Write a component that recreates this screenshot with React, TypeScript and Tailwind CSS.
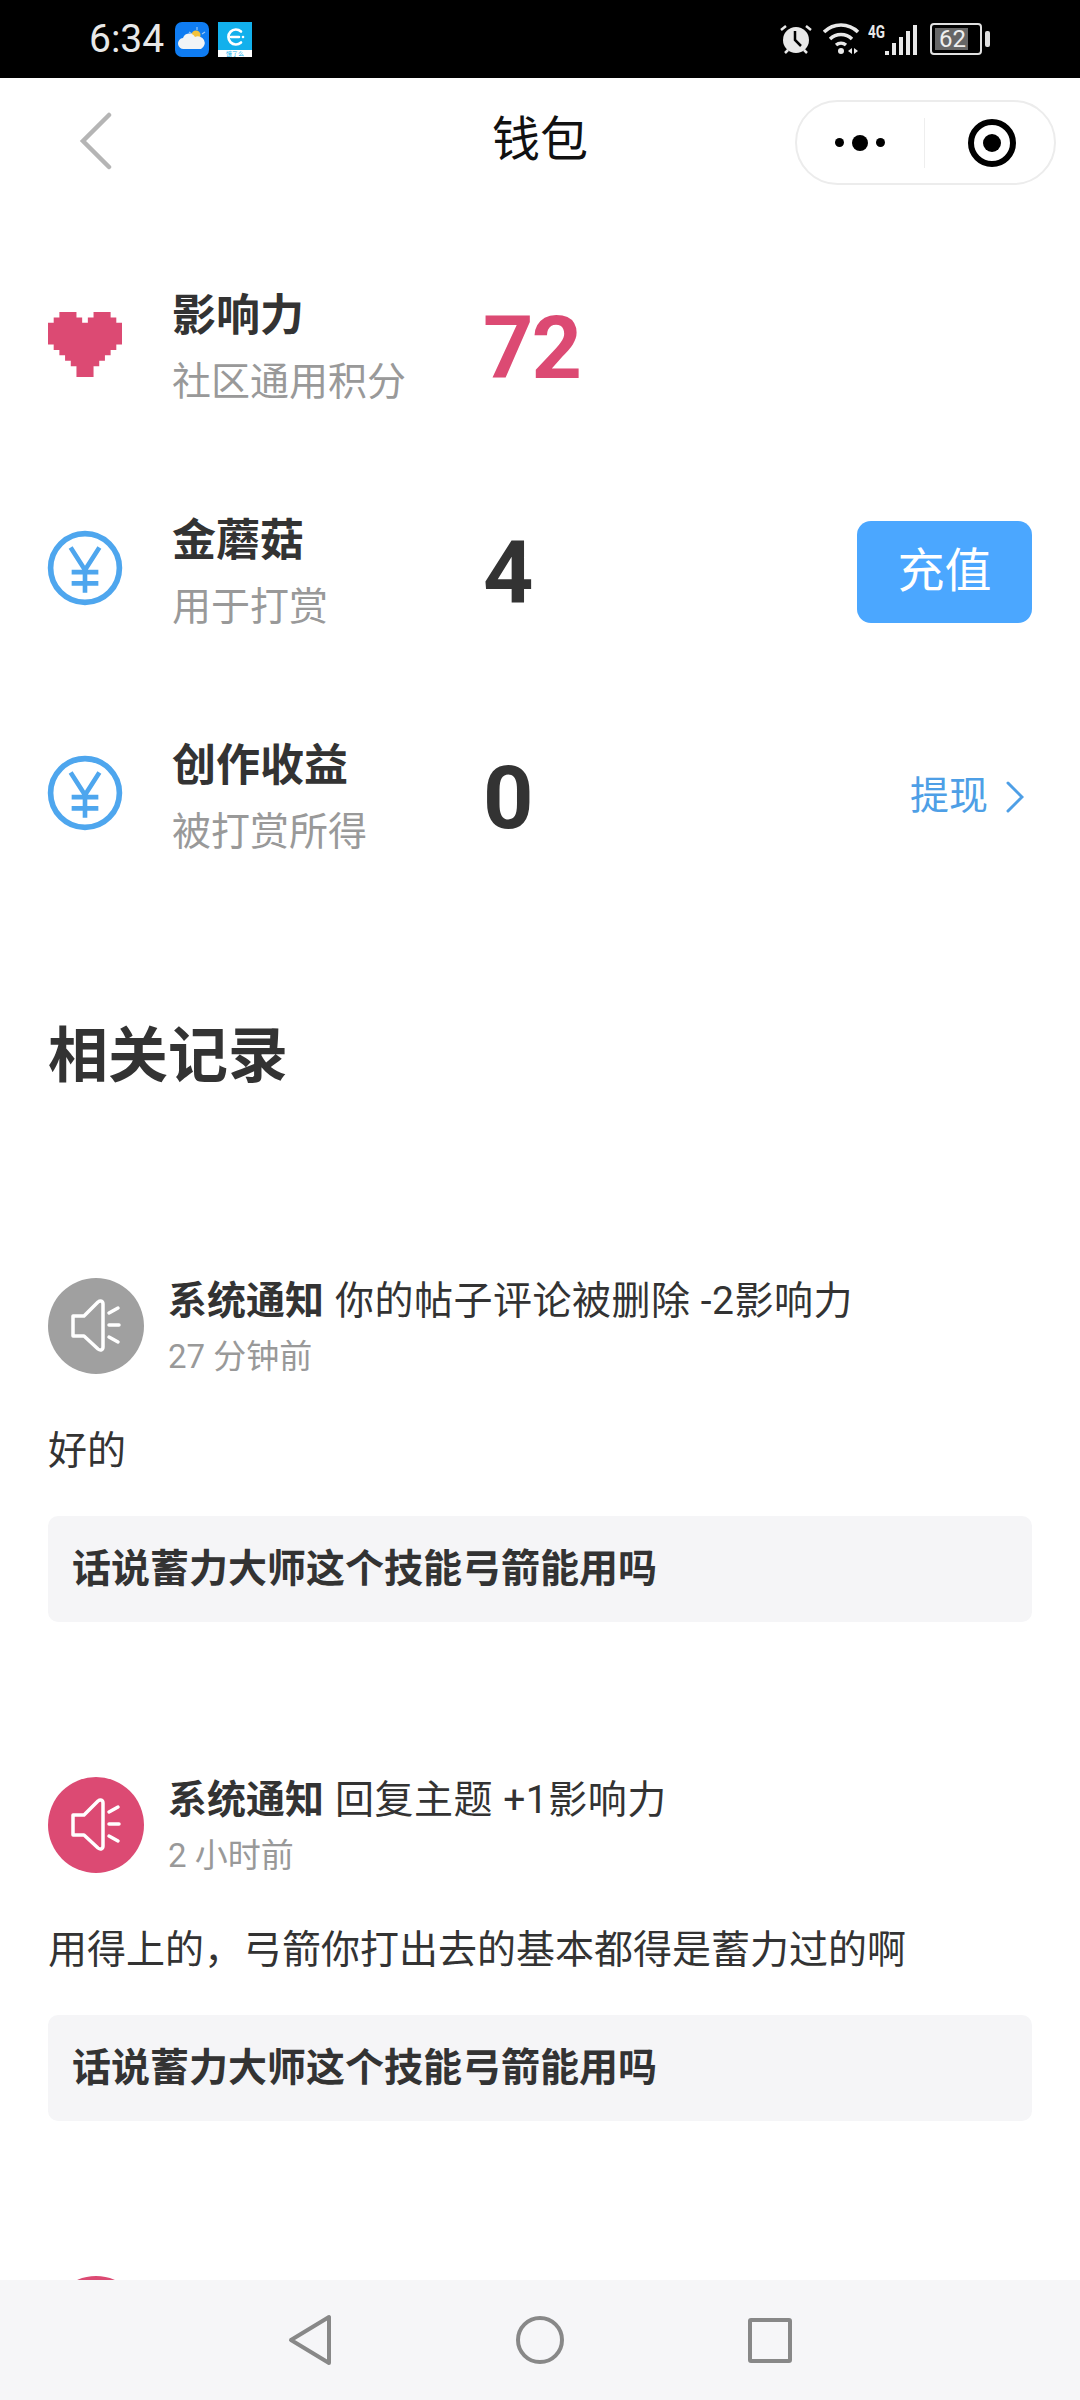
import type { ReactNode } from 'react';

const FONT = "font-['Roboto','Noto_Sans_CJK_SC',sans-serif]";

function StatusBar() {
  return (
    <div className="h-[78px] shrink-0 bg-black flex items-center pl-[89px] pr-[90px] text-[#e8e8e8]">
      <span className="text-[39px] leading-none w-[86px]">6:34</span>
      {/* weather */}
      <svg width="34" height="35" viewBox="0 0 34 35">
        <rect width="34" height="35" rx="7" fill="#0f7cf2" />
        <path d="M22 5v3M30 10l-3 2M14 10l3 2" stroke="#9cc9f5" strokeWidth="1.200" />
        <circle cx="21" cy="13" r="4.500" fill="#f4c23c" />
        <path d="M9 27a5.500 5.500 0 0 1-1-11 6.500 6.500 0 0 1 12-1 6 6 0 0 1 6 12z" fill="#f2f4f6" />
      </svg>
      {/* eleme */}
      <div className="ml-[9px] w-[34px] h-[35px] bg-[#12b0ec] flex flex-col items-center overflow-hidden">
        <svg width="34" height="28" viewBox="0 0 34 28" className="shrink-0">
          <path d="M21 15H13M23 9.500a7.500 7.500 0 1 0 0 11" fill="none" stroke="#fff" strokeWidth="2.600" strokeLinecap="round" />
          <circle cx="25" cy="15" r="1.300" fill="#fff" />
        </svg>
        <div className="flex-1 w-full bg-white text-[6px] leading-[7px] text-center text-[#12b0ec]">饿了么</div>
      </div>
      <div className="ml-auto flex items-center">
        <svg width="34" height="32" viewBox="0 0 34 32" className="mr-[10px]">
          <circle cx="17" cy="17" r="13" fill="#e8e8e8" />
          <path d="M16 8v9l6 6" fill="none" stroke="#000" strokeWidth="2.500" />
          <path d="M2 7l5-4M32 7l-5-4M6 30l3-3M28 30l-3-3" stroke="#e8e8e8" strokeWidth="2.500" />
        </svg>
        <svg width="37" height="32" viewBox="0 0 37 32" className="mr-[8px]">
          <path d="M1 9a24 24 0 0 1 34 0M7 16a16 16 0 0 1 22 0M13 22a8 8 0 0 1 10 0" fill="none" stroke="#e8e8e8" strokeWidth="3.500" />
          <circle cx="18" cy="28" r="3" fill="#e8e8e8" />
          <path d="M29 25v6l-4-3zM31 25l4 3-4 3z" fill="#e8e8e8" />
        </svg>
        <div className="relative w-[49px] h-[31px] mr-[13px]">
          <span className="absolute left-0 top-[-1px] text-[18px] font-bold leading-none scale-x-75 origin-left">4G</span>
          <div className="absolute inset-0 flex items-end justify-end gap-[3px]">
            <div className="w-[4px] h-[4px] bg-[#e8e8e8]" />
            <div className="w-[4px] h-[12px] bg-[#e8e8e8]" />
            <div className="w-[4px] h-[18px] bg-[#e8e8e8]" />
            <div className="w-[4px] h-[24px] bg-[#e8e8e8]" />
            <div className="w-[4px] h-[30px] bg-[#e8e8e8]" />
          </div>
        </div>
        <div className="w-[52px] h-[32px] rounded-[4px] border-2 border-[#e0e0e0] p-[3px] flex">
          <div className="relative w-[33px] bg-[#666] flex items-center">
            <span className="absolute left-[4px] text-[24px] leading-none text-[#eee]">62</span>
          </div>
        </div>
        <div className="ml-[3px] w-[5px] h-[16px] rounded-[2px] bg-[#e0e0e0]" />
      </div>
    </div>
  );
}

function NavBar() {
  return (
    <div className="relative h-[126px] shrink-0 flex items-center justify-center">
      <svg width="34" height="58" viewBox="0 0 34 58" className="absolute left-[79px] top-[34px]">
        <path d="M30 3L4 29l26 26" fill="none" stroke="#b5b5b5" strokeWidth="4.500" strokeLinecap="round" />
      </svg>
      <h1 className="text-[48px] font-normal leading-none text-[#111] mt-[-2px]">钱包</h1>
      <div className="absolute left-[795px] top-[22px] w-[261px] h-[85px] rounded-full border-2 border-[#ececec] bg-white flex items-center">
        <div className="w-[125px] flex items-center justify-center gap-[8px]">
          <div className="w-[9px] h-[9px] rounded-full bg-black" />
          <div className="w-[16px] h-[16px] rounded-full bg-black" />
          <div className="w-[9px] h-[9px] rounded-full bg-black" />
        </div>
        <div className="ml-[2px] w-[1px] h-[50px] bg-[#eeeeee]" />
        <div className="flex-1 flex items-center justify-center pl-[4px]">
          <div className="w-[48px] h-[48px] rounded-full border-[6px] border-black flex items-center justify-center">
            <div className="w-[18px] h-[18px] rounded-full bg-black" />
          </div>
        </div>
      </div>
    </div>
  );
}

function PixelHeart() {
  return (
    <svg width="74" height="65" viewBox="0 0 13 12" preserveAspectRatio="none" fill="#dc4a73" className="mt-[-4px]">
      <path d="M2 0h3v1h1v1h1V1h1V0h3v1h1v1h1v4h-1v1h-1v1h-1v1H9v1H8v2H5v-2H4V9H3V8H2V7H1V6H0V2h1V1h1z" />
    </svg>
  );
}

function YuanIcon() {
  return (
    <svg width="76" height="76" viewBox="0 0 74 74" fill="none" stroke="#4ea6ee" className="mt-[-7px] ml-[-1px]">
      <circle cx="37" cy="37" r="33.500" strokeWidth="5.500" />
      <path d="M23 17l14 22 14-22M37 39v22M24 41h26M24 52h26" strokeWidth="4.500" />
    </svg>
  );
}

function BalanceRow({ icon, title, sub, value, valueClass, action }: {
  icon: ReactNode; title: string; sub: string; value: string; valueClass: string; action?: ReactNode;
}) {
  return (
    <div className="h-[225px] flex items-center">
      <div className="w-[124px] shrink-0 flex items-center">{icon}</div>
      <div className="w-[311px] shrink-0">
        <div className="text-[44px] leading-[56px] font-bold text-[#333]">{title}</div>
        <div className="text-[39px] leading-[48px] mt-[14px] text-[#999]">{sub}</div>
      </div>
      <div className={`text-[88px] leading-none font-bold tracking-[-2px] mt-[2px] font-['Roboto',sans-serif] ${valueClass}`}>{value}</div>
      {action && <div className="ml-auto">{action}</div>}
    </div>
  );
}

function SpeakerAvatar({ color }: { color: string }) {
  return (
    <div className={`w-[96px] h-[96px] shrink-0 rounded-full flex items-center justify-center ${color}`}>
      <svg width="50" height="54" viewBox="0 0 50 54" fill="none" stroke="#fff" strokeWidth="3.500" strokeLinecap="round" strokeLinejoin="round">
        <path d="M2 17h11L27 3c2.500-2 5-1 5 2v43c0 3-2.500 4-5 2L13 37H2z" />
        <path d="M38 14l9-5M38 26h10M38 38l9 5" />
      </svg>
    </div>
  );
}

function RecordCard({ color, title, time, body, topic }: {
  color: string; title: string; time: string; body: string; topic: string;
}) {
  return (
    <div className="h-[499px]">
      <div className="flex items-start">
        <SpeakerAvatar color={color} />
        <div className="ml-[24px]">
          <div className="text-[39px] leading-[46px] text-[#333] whitespace-nowrap">
            <span className="font-bold">系统通知</span>
            <span className="ml-[11px] tracking-[0.5px]">{title}</span>
          </div>
          <div className="text-[33px] leading-[40px] mt-[13px] text-[#999]">{time}</div>
        </div>
      </div>
      <div className="mt-[51px] text-[39px] leading-[46px] text-[#333]">{body}</div>
      <div className="mt-[42px] h-[106px] rounded-[10px] bg-[#f5f5f7] flex items-center pl-[24px] text-[39px] font-bold text-[#333]">
        {topic}
      </div>
    </div>
  );
}

function BottomNav() {
  return (
    <div className="h-[120px] shrink-0 bg-[#f6f6f8] flex items-center justify-center gap-[184px]">
      <svg width="44" height="52" viewBox="0 0 44 52" fill="none" stroke="#888" strokeWidth="4" strokeLinejoin="round">
        <path d="M41 3v46L3 26z" />
      </svg>
      <div className="w-[48px] h-[48px] rounded-full border-[4px] border-[#888]" />
      <div className="w-[44px] h-[45px] rounded-[3px] border-[4px] border-[#888]" />
    </div>
  );
}

export default function App() {
  return (
    <div className={`w-[1080px] h-[2400px] overflow-hidden bg-white flex flex-col ${FONT}`}>
      <StatusBar />
      <NavBar />
      <div className="flex-1 overflow-hidden px-[48px]">
        <div className="pt-[30px]">
          <BalanceRow icon={<PixelHeart />} title="影响力" sub="社区通用积分" value="72" valueClass="text-[#dc4a73]" />
          <BalanceRow
            icon={<YuanIcon />}
            title="金蘑菇"
            sub="用于打赏"
            value="4"
            valueClass="text-[#333]"
            action={
              <button className="w-[175px] h-[102px] rounded-[14px] bg-[#4ba7ff] text-white text-[47px]">充值</button>
            }
          />
          <BalanceRow
            icon={<YuanIcon />}
            title="创作收益"
            sub="被打赏所得"
            value="0"
            valueClass="text-[#333]"
            action={
              <div className="flex items-center gap-[18px] pr-[8px] text-[39px] text-[#4e9fe6]">
                提现
                <svg width="18" height="32" viewBox="0 0 18 32" fill="none" stroke="#4e9fe6" strokeWidth="3" strokeLinecap="round">
                  <path d="M2 2l14 14L2 30" />
                </svg>
              </div>
            }
          />
        </div>
        <h2 className="mt-[108px] text-[60px] leading-[80px] font-bold text-[#333]">相关记录</h2>
        <div className="mt-[181px]">
          <RecordCard
            color="bg-[#a0a0a0]"
            title="你的帖子评论被删除 -2影响力"
            time="27 分钟前"
            body="好的"
            topic="话说蓄力大师这个技能弓箭能用吗"
          />
          <RecordCard
            color="bg-[#dc4a73]"
            title="回复主题 +1影响力"
            time="2 小时前"
            body="用得上的，弓箭你打出去的基本都得是蓄力过的啊"
            topic="话说蓄力大师这个技能弓箭能用吗"
          />
          <div className="w-[96px] h-[96px] rounded-full bg-[#dc4a73]" />
        </div>
      </div>
      <BottomNav />
    </div>
  );
}
